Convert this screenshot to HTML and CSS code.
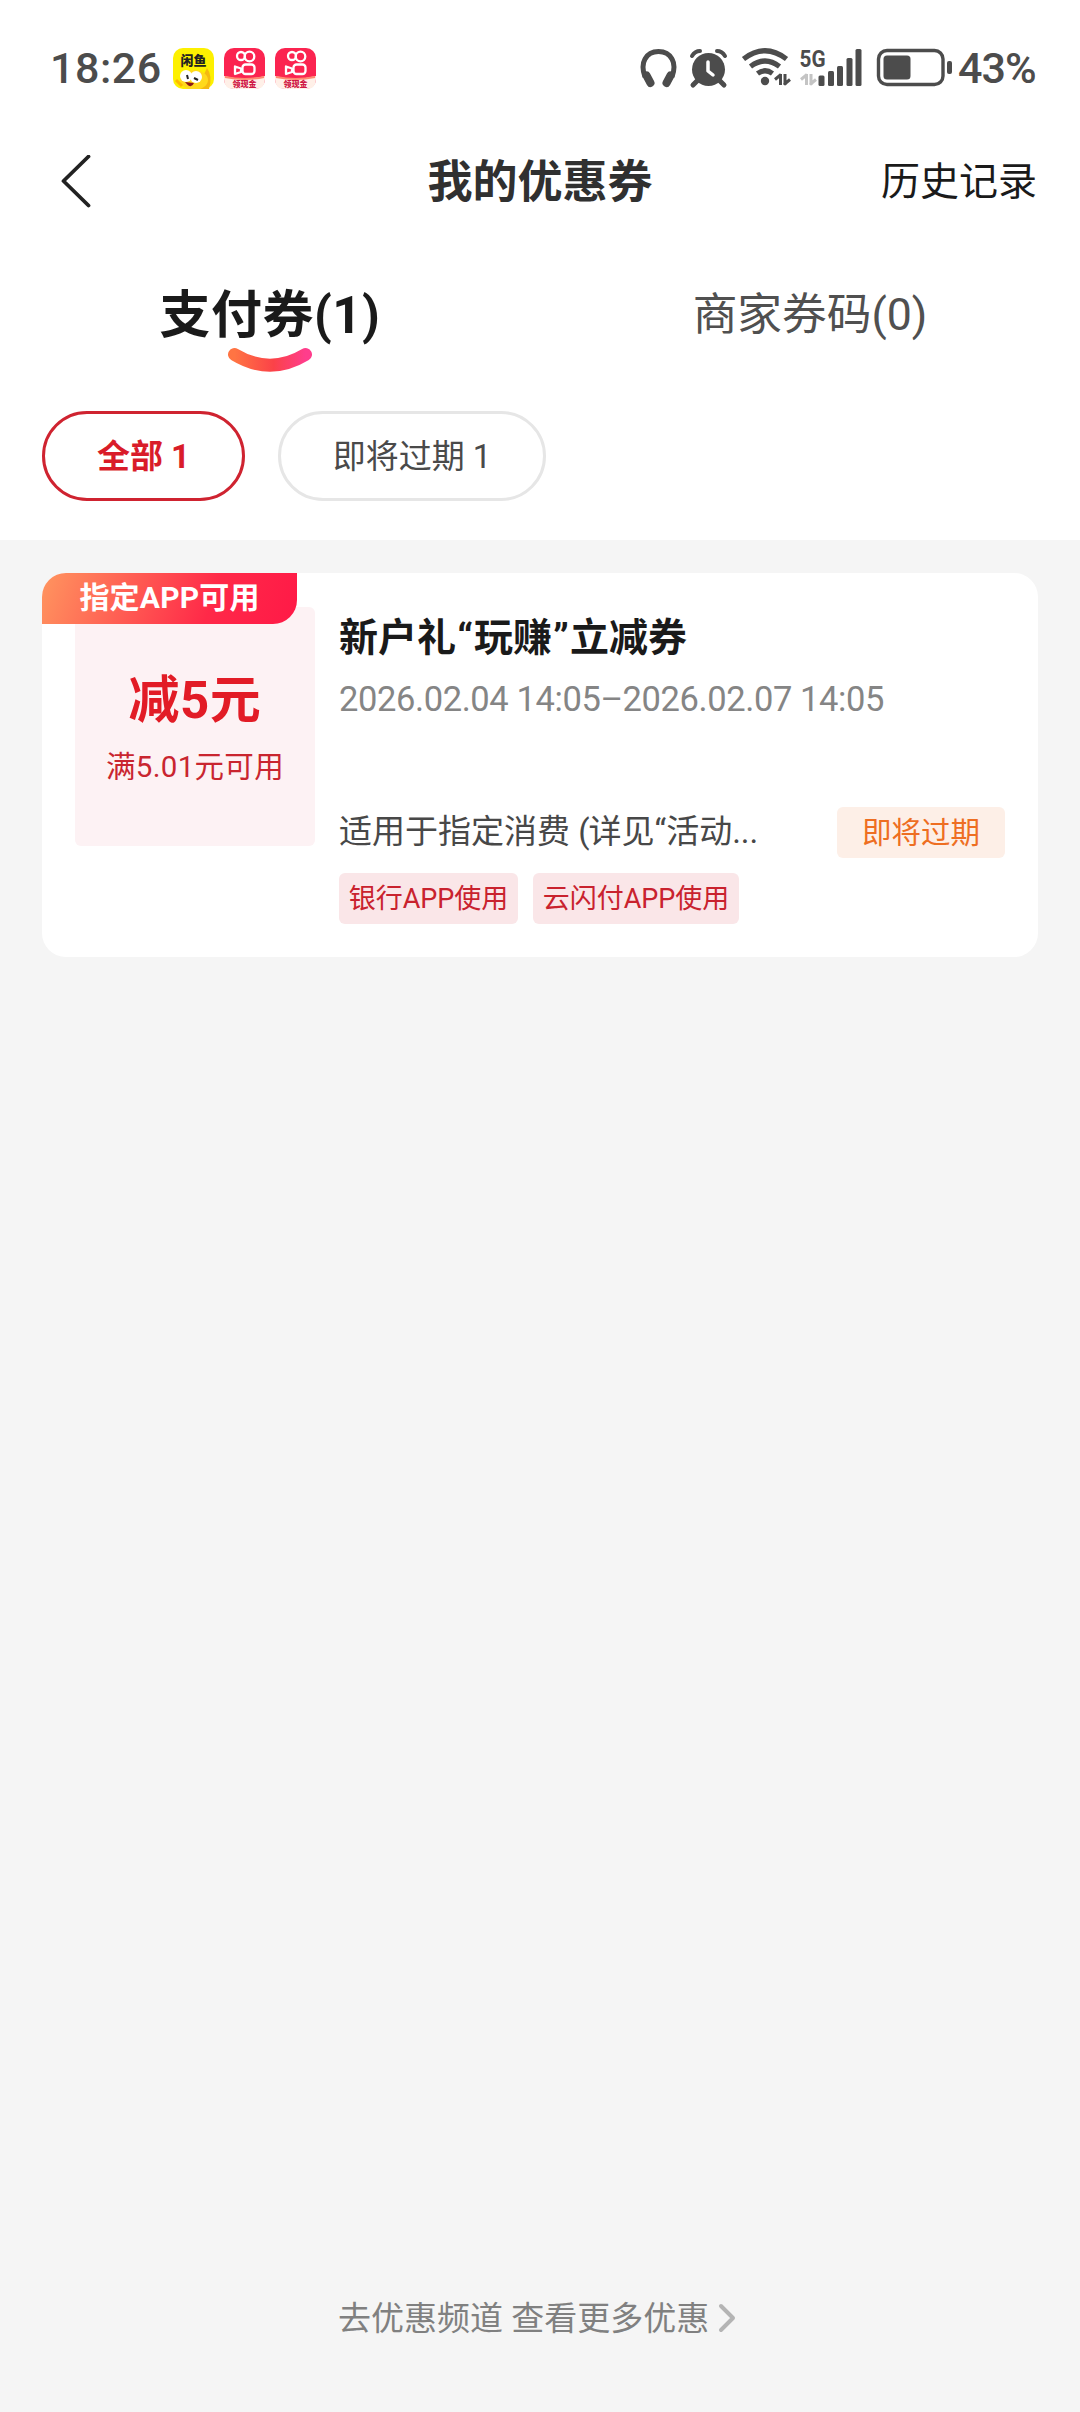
FILE: index.html
```html
<!DOCTYPE html>
<html lang="zh-CN">
<head>
<meta charset="utf-8">
<title>我的优惠券</title>
<link rel="stylesheet" href="styles.css">
</head>
<body>
<div class="status">
  <span class="clock">18:26</span>
  <div class="apps">
    <svg width="41" height="41" viewBox="0 0 41 41">
      <rect width="41" height="41" rx="10" fill="#fdf000"/>
      <path d="M34 20q6 8 2 21h-12z" fill="#f5b912"/>
      <ellipse cx="21" cy="32" rx="14" ry="10" fill="#ffd91c"/>
      <circle cx="13" cy="28" r="6" fill="#fff"/><circle cx="23" cy="29" r="6" fill="#fff"/>
      <path d="M14 27l1 4M21 30l4 2" stroke="#222" stroke-width="2" fill="none"/>
      <path d="M12 34l9 1q-3 7-9-1z" fill="#8c1616"/>
      <path d="M3 32l6 6" stroke="#ffb800" stroke-width="3"/>
      <text x="7.500" y="17" class="app-name">闲鱼</text>
    </svg>
    <svg width="41" height="41" viewBox="0 0 41 41">
      <use href="#video-app"/>
    </svg>
    <svg width="41" height="41" viewBox="0 0 41 41">
      <g id="video-app">
        <rect width="41" height="41" rx="10" fill="#fb2450"/>
        <path d="M0 28q20 5 41 0v3q0 10-10 10H10Q0 41 0 31z" fill="#fff0e8"/>
        <path d="M1 29q20 4 39 0" stroke="#ff8a70" stroke-width="2" fill="none"/>
        <g fill="none" stroke="#fff" stroke-width="2.300" stroke-linejoin="round">
          <circle cx="17" cy="8" r="4"/><circle cx="25.500" cy="8.500" r="4.800"/>
          <rect x="18.500" y="16.500" width="12" height="9.500" rx="3"/>
          <path d="M11 18.500l6 2v3.500l-6 2z"/>
        </g>
        <text x="8.500" y="39" class="app-cash">领现金</text>
      </g>
    </svg>
  </div>
  <div class="indicators">
    <svg class="phone-icons" width="313" height="46" viewBox="640 45 313 46" fill="#4c4c4c">
      <path d="M645 77q-4-11 0-18 4-7.500 13.500-7.500t13.500 7.500q4 7 0 18" fill="none" stroke="#4c4c4c" stroke-width="5"/>
      <path d="M646.500 75.500l4 7.500M670.500 75.500l-4 7.500" stroke="#4c4c4c" stroke-width="8" stroke-linecap="round"/>
      <circle cx="708.500" cy="69.500" r="16.500"/>
      <path d="M692 56q3-5 8-5M717 51q5 0 8 5" fill="none" stroke="#4c4c4c" stroke-width="4" stroke-linecap="round"/>
      <path d="M698 80l-5 5M719 80l5 5" stroke="#4c4c4c" stroke-width="5" stroke-linecap="round"/>
      <path d="M708 62v9l5 4" fill="none" stroke="#fff" stroke-width="3.500" stroke-linecap="round" stroke-linejoin="round"/>
      <g fill="none" stroke="#4c4c4c" stroke-width="5.200">
        <path d="M743.500 59q21.500-16.500 43 0M750.500 66.500q14.500-11 29 0M757.500 73.500q7.500-5.500 15 0"/>
      </g>
      <circle cx="765" cy="81" r="4.200"/>
      <path d="M780.500 74v11M775 79.500l6-5M785 74v11M784 84.500l6-5" fill="none" stroke="#4c4c4c" stroke-width="3"/>
      <text x="799.500" y="66.500" class="network" textLength="26" lengthAdjust="spacingAndGlyphs">5G</text>
      <path d="M806.500 74v11M801 79.500l6-5M811 74v11M810 84.500l6-5" fill="none" stroke="#c4c4c4" stroke-width="3"/>
      <rect x="818.500" y="75.500" width="6" height="10.500" rx="1.500"/>
      <rect x="828" y="71" width="6" height="15" rx="1.500"/>
      <rect x="837" y="66" width="6" height="20" rx="1.500"/>
      <rect x="846.500" y="58" width="6" height="28" rx="1.500"/>
      <rect x="855.500" y="49" width="6" height="37" rx="1.500"/>
      <rect x="878.500" y="50.500" width="64.500" height="34" rx="8.500" fill="none" stroke="#4c4c4c" stroke-width="3.400"/>
      <rect x="883.500" y="55.500" width="27" height="24" rx="3.500"/>
      <rect x="947" y="61" width="5" height="13" rx="2"/>
    </svg>
    <span class="percent">43%</span>
  </div>
</div>

<header class="nav">
  <svg class="back" width="32" height="54" viewBox="0 0 32 54"><path d="M28.500 1.500L3.500 26l25 24.500" fill="none" stroke="#222" stroke-width="3.800" stroke-linecap="round" stroke-linejoin="round"/></svg>
  <h1>我的优惠券</h1>
  <a class="history">历史记录</a>
</header>

<nav class="tabs">
  <div class="tab active">支付券(1)
    <svg class="smile" width="86" height="26" viewBox="0 0 86 26">
      <defs><linearGradient id="smile-fill"><stop offset="0" stop-color="#ff7443"/><stop offset=".55" stop-color="#fb4248"/><stop offset="1" stop-color="#ff3d8c"/></linearGradient></defs>
      <path d="M7.500 7.500Q43 29 78.500 7.500" fill="none" stroke="url(#smile-fill)" stroke-width="13" stroke-linecap="round"/>
    </svg>
  </div>
  <div class="tab">商家券码(0)</div>
</nav>

<div class="filters">
  <div class="pill selected">全部 1</div>
  <div class="pill soon">即将过期 1</div>
</div>

<main class="list">
  <article class="coupon">
    <div class="ribbon">指定APP可用</div>
    <div class="value">
      <strong>减5元</strong>
      <span>满5.01元可用</span>
    </div>
    <div class="detail">
      <h2>新户礼<span class="quote">“</span>玩赚<span class="quote">”</span>立减券</h2>
      <p class="date">2026.02.04 14:05–2026.02.07 14:05</p>
      <div class="scope">
        <p>适用于指定消费 <span class="paren">(</span>详见“活动...</p>
        <span class="expiring">即将过期</span>
      </div>
      <div class="tags"><span class="tag">银行APP使用</span><span class="tag wide">云闪付APP使用</span></div>
    </div>
  </article>
</main>

<footer class="more">
  <span>去优惠频道 查看更多优惠</span>
  <svg width="18" height="30" viewBox="0 0 18 30"><path d="M3 3l12 12L3 27" fill="none" stroke="#b4b4b4" stroke-width="4" stroke-linecap="round" stroke-linejoin="round"/></svg>
</footer>
</body>
</html>
```

FILE: styles.css
```css
* { box-sizing: border-box; }
body {
  margin: 0;
  width: 1080px;
  height: 2412px;
  display: flex;
  flex-direction: column;
  background: #fff;
  color: #1a1a1a;
  font-family: Roboto, "Noto Sans CJK SC", sans-serif;
  white-space: nowrap;
  overflow: hidden;
}
h1, h2, p { margin: 0; }
svg { display: block; flex: none; }

.status {
  height: 136px;
  padding: 0 44px 0 50px;
  display: flex;
  align-items: center;
  color: #4c4c4c;
}
.clock { width: 123px; font-size: 43px; font-weight: 500; letter-spacing: .5px; }
.apps { display: flex; gap: 10px; }
.app-name { font: 900 13px "Noto Sans CJK SC", sans-serif; fill: #222; }
.app-cash { font: 900 8px "Noto Sans CJK SC", sans-serif; fill: #cf1745; }
.indicators { margin-left: auto; display: flex; align-items: center; gap: 5px; }
.network { font: 700 24px Roboto, sans-serif; }
.percent { width: 78px; font-size: 43px; font-weight: 500; letter-spacing: -1px; }

.nav {
  height: 92px;
  padding: 0 43px 0 60px;
  display: grid;
  grid-template-columns: 1fr auto 1fr;
  align-items: center;
}
h1 { font-size: 45px; line-height: 60px; color: #303030; margin: 2px 17px 0 0; }
.history { justify-self: end; font-size: 39px; line-height: 56px; }

.tabs { height: 183px; display: flex; }
.tab {
  position: relative;
  flex: 1;
  text-align: center;
  line-height: 175px;
  font-size: 44.7px;
  color: #505050;
}
.tab.active { font-size: 51px; font-weight: 700; color: #1a1a1a; letter-spacing: .5px; }
.smile { position: absolute; left: 227px; top: 119px; }

.filters { height: 129px; padding-left: 42px; display: flex; gap: 33px; }
.pill {
  height: 90px;
  width: 203px;
  border: 3px solid #e6e6e6;
  border-radius: 45px;
  line-height: 86px;
  text-align: center;
  font-size: 33px;
  color: #4a4a4a;
}
.pill.selected { border-color: #cf2330; color: #d91c29; font-weight: 700; }
.pill.soon { width: 268px; }

.list { flex: 1; background: #f5f5f5; padding: 33px 42px; }
.coupon {
  position: relative;
  height: 384px;
  padding: 34px 33px 33px;
  border-radius: 24px;
  background: #fff;
  display: flex;
  gap: 24px;
}
.ribbon {
  position: absolute;
  left: 0;
  top: 0;
  width: 255px;
  height: 51px;
  border-radius: 24px 0 24px 0;
  background: linear-gradient(110deg, #ff955f, #ff2948 66%, #ff1947);
  color: #fff;
  font-size: 30px;
  font-weight: 700;
  line-height: 50px;
  letter-spacing: .2px;
  text-align: center;
}
.value {
  width: 240px;
  height: 239px;
  padding-top: 63px;
  border-radius: 6px;
  background: #fdf2f4;
  display: flex;
  flex-direction: column;
  align-items: center;
  color: #e21c26;
}
.value strong { font-size: 51px; line-height: 62px; letter-spacing: .5px; }
.value span { font-size: 29.5px; line-height: 40px; margin-top: 15px; color: #c9252f; letter-spacing: .3px; }
.detail { flex: 1; display: flex; flex-direction: column; }
h2 { font-size: 39px; line-height: 62px; }
.quote { display: inline-block; width: 18px; text-align: center; }
.date { font-size: 34.5px; line-height: 50px; margin-top: 5px; color: #858585; letter-spacing: -.4px; }
.scope { margin-top: 83px; height: 51px; display: flex; justify-content: space-between; color: #484848; }
.scope p { font-size: 33px; line-height: 50px; }
.paren { margin-right: -1px; }
.expiring {
  width: 168px;
  border-radius: 6px;
  background: #fdefe7;
  color: #ee6e22;
  font-size: 29.5px;
  line-height: 52px;
  text-align: center;
}
.tags { margin-top: 15px; display: flex; gap: 15px; }
.tag {
  width: 179px;
  height: 51px;
  border-radius: 6px;
  background: #fae6e8;
  color: #c9222e;
  font-size: 27px;
  line-height: 52px;
  text-align: center;
}
.tag.wide { width: 206px; }

.more {
  height: 186px;
  padding-left: 338px;
  background: #f5f5f5;
  display: flex;
  gap: 9px;
  color: #808080;
  font-size: 33px;
  line-height: 186px;
}
.more svg { margin-top: 77px; }
```
